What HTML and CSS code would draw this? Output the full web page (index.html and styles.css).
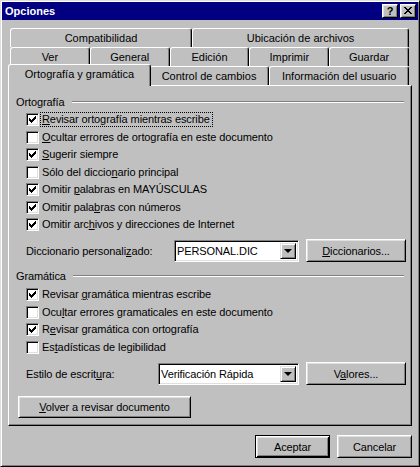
FILE: index.html
```html
<!DOCTYPE html>
<html lang="es">
<head>
  <meta charset="UTF-8">
  <title>Opciones</title>
  <link rel="stylesheet" href="styles.css">
</head>
<body>

<div class="window">
  <div class="titlebar">
    <span class="title">Opciones</span>
    <div class="title-btns">
      <div class="tbtn">?</div>
      <div class="tbtn close">
        <svg width="8" height="7" viewBox="0 0 8 7" shape-rendering="crispEdges">
          <path d="M0 0h2v1h-2zM6 0h2v1h-2zM1 1h2v1h-2zM5 1h2v1h-2zM2 2h4v1h-4zM3 3h2v1h-2zM2 4h4v1h-4zM1 5h2v1h-2zM5 5h2v1h-2zM0 6h2v1h-2zM6 6h2v1h-2z" fill="#000"/>
        </svg>
      </div>
    </div>
  </div>

  <div class="tabs">
    <div class="tab-row">
      <div class="tab">Compatibilidad</div>
      <div class="tab">Ubicación de archivos</div>
    </div>
    <div class="tab-row even">
      <div class="tab">Ver</div>
      <div class="tab">General</div>
      <div class="tab">Edición</div>
      <div class="tab">Imprimir</div>
      <div class="tab">Guardar</div>
    </div>
    <div class="tab-row">
      <div class="tab active">Ortografía y gramática</div>
      <div class="tab">Control de cambios</div>
      <div class="tab">Información del usuario</div>
    </div>
  </div>

  <div class="panel">
    <div class="group-head"><span>Ortografía</span><div class="etch"></div></div>
    <div class="options first">
      <div class="check"><span class="box on"></span><span class="lbl focus"><u>R</u>evisar ortografía mientras escribe</span></div>
      <div class="check"><span class="box"></span><span class="lbl"><u>O</u>cultar errores de ortografía en este documento</span></div>
      <div class="check"><span class="box on"></span><span class="lbl"><u>S</u>ugerir siempre</span></div>
      <div class="check"><span class="box"></span><span class="lbl">Sólo del diccio<u>n</u>ario principal</span></div>
      <div class="check"><span class="box on"></span><span class="lbl">Omitir <u>p</u>alabras en MAYÚSCULAS</span></div>
      <div class="check"><span class="box on"></span><span class="lbl">Omitir pala<u>b</u>ras con números</span></div>
      <div class="check"><span class="box on"></span><span class="lbl">Omitir arc<u>h</u>ivos y direcciones de Internet</span></div>
    </div>
    <div class="field-row dict">
      <span class="field-label">Diccionario personali<u>z</u>ado:</span>
      <div class="combo combo-dict">
        <span class="combo-text">PERSONAL.DIC</span>
        <span class="drop"><span class="arrow"></span></span>
      </div>
      <div class="btn side"><span><u>D</u>iccionarios...</span></div>
    </div>

    <div class="group-head gram"><span>Gramática</span><div class="etch"></div></div>
    <div class="options second">
      <div class="check"><span class="box on"></span><span class="lbl">Revisar <u>g</u>ramática mientras escribe</span></div>
      <div class="check"><span class="box"></span><span class="lbl">Ocu<u>l</u>tar errores gramaticales en este documento</span></div>
      <div class="check"><span class="box on"></span><span class="lbl">R<u>e</u>visar gramática con ortografía</span></div>
      <div class="check"><span class="box"></span><span class="lbl">Es<u>t</u>adísticas de legibilidad</span></div>
    </div>
    <div class="field-row style">
      <span class="field-label">Estilo de escrit<u>u</u>ra:</span>
      <div class="combo combo-style">
        <span class="combo-text">Verificación Rápida</span>
        <span class="drop"><span class="arrow"></span></span>
      </div>
      <div class="btn side"><span>V<u>a</u>lores...</span></div>
    </div>

    <div class="btn recheck"><span><u>V</u>olver a revisar documento</span></div>
  </div>

  <div class="footer">
    <div class="btn default">Aceptar</div>
    <div class="btn">Cancelar</div>
  </div>
</div>

</body>
</html>
```

FILE: styles.css
```css
html, body {
  margin: 0;
  padding: 0;
  background: #c0c0c0;
}
body {
  font-family: 'Liberation Sans', Arial, sans-serif;
  font-size: 11px;
  letter-spacing: -0.1px;
  color: #000;
}
u {
  text-decoration-thickness: 1px;
  text-underline-offset: 1px;
}
.window {
  width: 420px;
  height: 467px;
  box-sizing: border-box;
  padding: 1px;
  background: #c0c0c0;
  border: 1px solid;
  border-color: #dfdfdf #000 #000 #dfdfdf;
  box-shadow: inset 1px 1px #fff, inset -1px -1px #808080;
}

/* title bar */
.titlebar {
  height: 18px;
  background: #000080;
  display: flex;
  align-items: center;
  justify-content: space-between;
  padding: 0 2px 0 3px;
}
.title {
  color: #fff;
  font-weight: bold;
  letter-spacing: 0;
}
.title-btns {
  display: flex;
  gap: 2px;
}
.tbtn {
  width: 16px;
  height: 14px;
  box-sizing: border-box;
  background: #c0c0c0;
  border: 1px solid;
  border-color: #fff #000 #000 #fff;
  box-shadow: inset 1px 1px #dfdfdf, inset -1px -1px #808080;
  display: flex;
  align-items: center;
  justify-content: center;
  font-weight: bold;
  font-size: 11px;
  line-height: 12px;
  padding-bottom: 1px;
}
.tbtn.close svg {
  display: block;
  margin-left: -1px;
}

/* tabs */
.tabs {
  margin: 8px 9px 0 8px;
}
.tab-row {
  display: flex;
  height: 19px;
}
.tab {
  flex: 1 1 auto;
  box-sizing: border-box;
  height: 19px;
  padding-top: 3px;
  line-height: 13px;
  text-align: center;
  white-space: nowrap;
  letter-spacing: 0;
  background: #c0c0c0;
  border: 1px solid;
  border-bottom: none;
  border-color: #fff #000 #000 #fff;
  border-radius: 3px 3px 0 0;
  box-shadow: inset -1px 0 #808080;
}
.tab-row.even .tab {
  flex: 1 1 0;
}
.tab.active {
  position: relative;
  z-index: 1;
  height: 22px;
  margin: -2px -2px -1px -2px;
  padding: 3px 4px 0;
}

/* panel */
.panel {
  margin: 0 6px;
  height: 341px;
  box-sizing: border-box;
  padding: 9px 5px 0 7px;
  border: 1px solid;
  border-color: #fff #000 #000 #fff;
  box-shadow: inset -1px -1px #808080;
}
.group-head {
  display: flex;
  align-items: center;
  height: 14px;
  margin-right: 2px;
}
.group-head.gram {
  margin-top: 7px;
}
.etch {
  flex: 1;
  height: 0;
  margin-left: 7px;
  border-top: 1px solid #808080;
  border-bottom: 1px solid #fff;
}
.options.first {
  margin-top: 2px;
}
.options.second {
  margin-top: 3px;
}
.check {
  display: flex;
  align-items: center;
  height: 17.5px;
  padding-left: 10px;
}
.box {
  width: 13px;
  height: 13px;
  box-sizing: border-box;
  background: #fff;
  border: 1px solid;
  border-color: #808080 #fff #fff #808080;
  box-shadow: inset 1px 1px #000, inset -1px -1px #dfdfdf;
  flex: none;
}
.box.on {
  background: #fff url("data:image/svg+xml,%3Csvg xmlns='http://www.w3.org/2000/svg' width='7' height='7' shape-rendering='crispEdges'%3E%3Cpath d='M6 0h1v1h-1zM5 1h2v1h-2zM0 2h1v1h-1zM4 2h3v1h-3zM0 3h2v1h-2zM3 3h3v1h-3zM0 4h5v1h-5zM1 5h3v1h-3zM2 6h1v1h-1z'/%3E%3C/svg%3E") no-repeat 2px 2px;
}
.lbl {
  margin-left: 1px;
  padding: 0 2px 0 1px;
  line-height: 13px;
  border: 1px solid transparent;
  white-space: nowrap;
}
.lbl.focus {
  border: 1px dotted #000;
}

/* combo + side button rows */
.field-row {
  display: flex;
  align-items: center;
  height: 23px;
  padding-left: 10px;
}
.field-row.dict {
  margin-top: 5.5px;
}
.field-row.style {
  margin-top: 6px;
}
.field-label {
  flex: 1;
}
.combo {
  height: 22px;
  box-sizing: border-box;
  background: #fff;
  border: 1px solid;
  border-color: #808080 #fff #fff #808080;
  box-shadow: inset 1px 1px #000, inset -1px -1px #dfdfdf;
  display: flex;
  align-items: center;
  padding: 2px;
}
.combo-dict {
  width: 125px;
}
.combo-style {
  width: 141px;
}
.combo-text {
  flex: 1;
  white-space: nowrap;
}
.drop {
  width: 16px;
  height: 16px;
  box-sizing: border-box;
  background: #c0c0c0;
  border: 1px solid;
  border-color: #dfdfdf #000 #000 #dfdfdf;
  box-shadow: inset 1px 1px #fff, inset -1px -1px #808080;
  display: flex;
  align-items: center;
  justify-content: center;
}
.arrow {
  width: 0;
  height: 0;
  border-left: 4px solid transparent;
  border-right: 4px solid transparent;
  border-top: 4px solid #000;
  margin-top: 1px;
}

/* buttons */
.btn {
  box-sizing: border-box;
  height: 23px;
  width: 75px;
  background: #c0c0c0;
  border: 1px solid;
  border-color: #fff #000 #000 #fff;
  box-shadow: inset 1px 1px #dfdfdf, inset -1px -1px #808080;
  display: flex;
  align-items: center;
  justify-content: center;
  white-space: nowrap;
}
.btn.side {
  width: 100px;
  margin-left: 7px;
}
.btn.recheck {
  width: 173px;
  height: 22px;
  margin: 11px 0 0 2px;
}
.btn.default {
  border-color: #000;
  box-shadow: inset 1px 1px #fff, inset -1px -1px #000, inset 2px 2px #dfdfdf, inset -2px -2px #808080;
}
.footer {
  display: flex;
  justify-content: flex-end;
  gap: 7px;
  margin-top: 9px;
  padding-right: 6px;
}
```
